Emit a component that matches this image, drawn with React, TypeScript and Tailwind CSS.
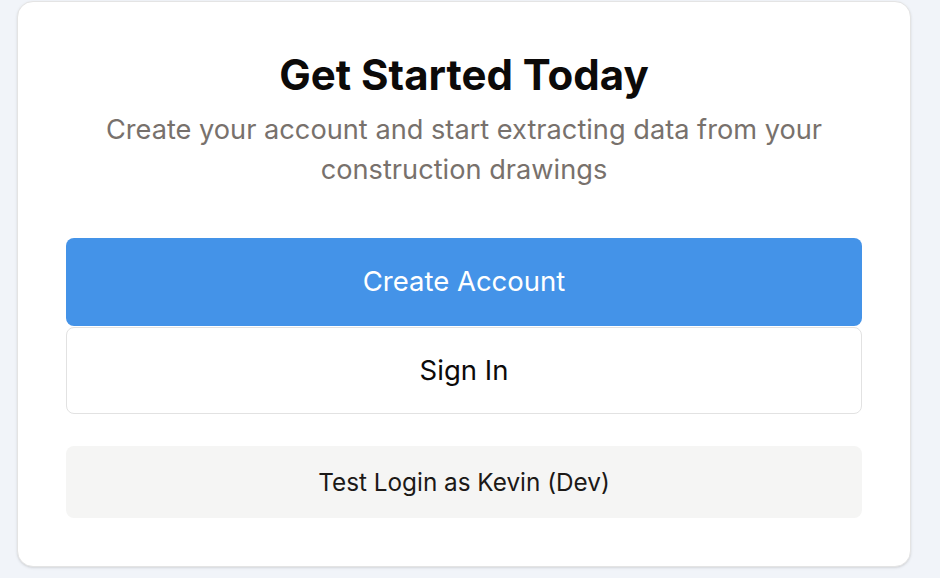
export default function App() {
  return (
    <div
      className="min-h-screen bg-[#f1f4f9] pl-[17px] pt-px"
      style={{ fontFamily: "Inter, 'Noto Sans', sans-serif" }}
    >
      <div className="w-[894px] rounded-2xl border border-[#e4e4e4] bg-white px-12 pt-12 pb-[48px] shadow-sm">
        <h1 className="text-center text-[42px] font-bold leading-[50px] text-[#0c0a09]">
          Get Started Today
        </h1>
        <p className="mt-[10px] text-center text-[27.2px] leading-10 text-[#78716c]">
          Create your account and start extracting data from your construction drawings
        </p>

        <div className="mt-12 flex flex-col">
          <button className="h-[88px] w-full rounded-lg bg-[#4493e8] text-[27.5px] text-white">
            Create Account
          </button>
          <button className="mt-px h-[87px] w-full rounded-lg border border-[#e2e2e2] bg-white text-[27.5px] text-[#0c0a09]">
            Sign In
          </button>
          <button className="mt-8 h-[72px] w-full rounded-lg bg-[#f5f5f4] text-[24.3px] text-[#1c1917]">
            Test Login as Kevin (Dev)
          </button>
        </div>
      </div>
    </div>
  );
}
